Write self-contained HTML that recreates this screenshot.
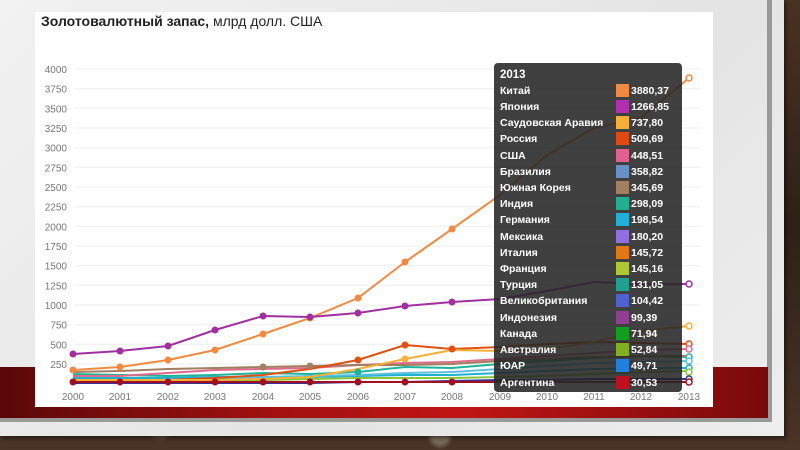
<!DOCTYPE html>
<html><head><meta charset="utf-8"><style>
*{margin:0;padding:0;box-sizing:border-box}
body{width:800px;height:450px;overflow:hidden;position:relative;font-family:"Liberation Sans",sans-serif;background:#3b2b20}
.brick{position:absolute;left:0;top:0;width:800px;height:450px;background:radial-gradient(circle at 20% 95%,#6a5848 0 8px,transparent 14px),radial-gradient(circle at 55% 97%,#7a6a58 0 7px,transparent 13px),radial-gradient(circle at 80% 93%,#6a5848 0 8px,transparent 14px),linear-gradient(180deg,#4a3222,#2e2018 50%,#4a3426)}
.slide{position:absolute;left:0;top:0;width:784px;height:436px;background:linear-gradient(135deg,#f2f2f2,#e4e4e4 60%,#eeeeee);box-shadow:2px 2px 4px rgba(0,0,0,.5)}
.vline{position:absolute;left:767px;top:0;width:5px;height:422px;background:#9a9a9a}
.red{position:absolute;left:0;top:367px;width:768px;height:51px;background:linear-gradient(90deg,#5a0808,#a11010 35%,#c01515 60%,#7a0a0a)}
.redsh{position:absolute;left:0;top:418px;width:772px;height:4px;background:#9a9a9a}
.chart{position:absolute;left:35px;top:12px;width:678px;height:395px;background:#fff}
.title{position:absolute;left:41px;top:13px;font-size:14px;color:#222}
.tip{position:absolute;left:494px;top:63px;width:188px;height:329px;background:rgba(38,38,38,.88);border-radius:4px;color:#fff;font-weight:bold;font-size:10.5px}
.row{position:absolute;left:6px;height:14px;line-height:14px}
.sw{position:absolute;left:122px;width:13px;height:13px}
.val{position:absolute;left:137px}
</style></head><body>
<div class="brick"></div>
<div class="slide"></div>
<div class="vline"></div>
<div class="red"></div>
<div class="redsh"></div>
<div class="chart"></div>
<div class="title"><b>Золотовалютный запас,</b> млрд долл. США</div>
<svg style="position:absolute;left:0;top:0" width="800" height="450" font-family="Liberation Sans" font-size="10" fill="#777">
<g stroke="#eeeeee" stroke-width="1">
<line x1="75" x2="700" y1="69" y2="69"/><line x1="75" x2="700" y1="88.7" y2="88.7"/><line x1="75" x2="700" y1="108.3" y2="108.3"/><line x1="75" x2="700" y1="128" y2="128"/><line x1="75" x2="700" y1="147.7" y2="147.7"/><line x1="75" x2="700" y1="167.3" y2="167.3"/><line x1="75" x2="700" y1="187" y2="187"/><line x1="75" x2="700" y1="206.7" y2="206.7"/><line x1="75" x2="700" y1="226.3" y2="226.3"/><line x1="75" x2="700" y1="246" y2="246"/><line x1="75" x2="700" y1="265.7" y2="265.7"/><line x1="75" x2="700" y1="285.3" y2="285.3"/><line x1="75" x2="700" y1="305" y2="305"/><line x1="75" x2="700" y1="324.7" y2="324.7"/><line x1="75" x2="700" y1="344.3" y2="344.3"/><line x1="75" x2="700" y1="364" y2="364"/>
</g>
<g text-anchor="end">
<text x="67" y="73">4000</text><text x="67" y="92.7">3750</text><text x="67" y="112.3">3500</text><text x="67" y="132">3250</text><text x="67" y="151.7">3000</text><text x="67" y="171.3">2750</text><text x="67" y="191">2500</text><text x="67" y="210.7">2250</text><text x="67" y="230.3">2000</text><text x="67" y="250">1750</text><text x="67" y="269.7">1500</text><text x="67" y="289.3">1250</text><text x="67" y="309">1000</text><text x="67" y="328.7">750</text><text x="67" y="348.3">500</text><text x="67" y="368">250</text>
</g>
<g text-anchor="middle">
<text x="73" y="400">2000</text><text x="120" y="400">2001</text><text x="168" y="400">2002</text><text x="215" y="400">2003</text><text x="263" y="400">2004</text><text x="310" y="400">2005</text><text x="358" y="400">2006</text><text x="405" y="400">2007</text><text x="452" y="400">2008</text><text x="500" y="400">2009</text><text x="547" y="400">2010</text><text x="594" y="400">2011</text><text x="641" y="400">2012</text><text x="689" y="400">2013</text>
</g>
<g fill="none" stroke-width="2">
<polyline stroke="#1fb39a" points="73,374 120,375 168,376 215,375 263,373 310,374 358,372 405,367 452,368 500,364 547,361 594,358 641,356 689,357"/>
<polyline stroke="#e06a8a" points="73,376 120,376 168,373 215,370 263,369 310,368 358,365 405,363 452,362 500,359 547,356 594,353 641,350 689,349"/>
<polyline stroke="#a08060" points="73,372 120,371 168,369 215,368 263,367 310,366 358,365 405,365 452,364 500,361 547,359 594,357 641,356 689,356"/>
<polyline stroke="#20b0d0" points="73,378 120,378 168,378 215,377 263,377 310,377 358,376 405,375 452,375 500,373 547,371 594,369 641,368 689,368"/>
<polyline stroke="#5bc0e0" points="73,380 120,380 168,380 215,379 263,377 310,376 358,375 405,373 452,372 500,369 547,366 594,363 641,362 689,361"/>
<polyline stroke="#8bc63a" points="73,381 120,381 168,380 215,380 263,380 310,379 358,378 405,378 452,378 500,377 547,376 594,374 641,372 689,371"/>
<polyline stroke="#e05010" points="73,381 120,381 168,380 215,378 263,375 310,369 358,360 405,345 452,349 500,347 547,344 594,342 641,343 689,344"/>
<polyline stroke="#f5b035" points="73,380 120,380 168,380 215,380 263,379 310,377 358,369 405,359 452,350 500,351 547,349 594,342 641,331 689,326"/>
<polyline stroke="#f08a40" points="73,370 120,367 168,360 215,350 263,334 310,318 358,298 405,262 452,229 500,195 547,155 594,128 641,118 689,78"/>
<polyline stroke="#a030a0" points="73,354 120,351 168,346 215,330 263,316 310,317 358,313 405,306 452,302 500,299 547,291 594,282 641,284 689,284"/>
<polyline stroke="#333399" points="73,383 120,383 168,383 215,383 263,383 310,383 358,382 405,382 452,381 500,380 547,380 594,379 641,379 689,379"/>
<polyline stroke="#a01020" points="73,382 120,382 168,382 215,382 263,382 310,382 358,382 405,382 452,382 500,382 547,382 594,382 641,382 689,382"/>
</g>
<g stroke-width="1.5" fill="#fff">
<circle cx="689" cy="78" r="3" stroke="#f08a40"/><circle cx="689" cy="284" r="3" stroke="#a030a0"/><circle cx="689" cy="326" r="3" stroke="#f5b035"/><circle cx="689" cy="344" r="3" stroke="#e05010"/><circle cx="689" cy="349" r="3" stroke="#e06a8a"/><circle cx="689" cy="357" r="3" stroke="#1fb39a"/><circle cx="689" cy="361" r="3" stroke="#5bc0e0"/><circle cx="689" cy="368" r="3" stroke="#20b0d0"/><circle cx="689" cy="372" r="3" stroke="#8bc63a"/><circle cx="689" cy="379" r="3" stroke="#333399"/><circle cx="689" cy="382" r="3" stroke="#a01020"/>
</g>
<g>
<circle cx="73" cy="370" r="3.5" fill="#f08a40"/><circle cx="120" cy="367" r="3.5" fill="#f08a40"/><circle cx="168" cy="360" r="3.5" fill="#f08a40"/><circle cx="215" cy="350" r="3.5" fill="#f08a40"/><circle cx="263" cy="334" r="3.5" fill="#f08a40"/><circle cx="310" cy="318" r="3.5" fill="#f08a40"/><circle cx="358" cy="298" r="3.5" fill="#f08a40"/><circle cx="405" cy="262" r="3.5" fill="#f08a40"/><circle cx="452" cy="229" r="3.5" fill="#f08a40"/>
<circle cx="73" cy="354" r="3.5" fill="#a030a0"/><circle cx="120" cy="351" r="3.5" fill="#a030a0"/><circle cx="168" cy="346" r="3.5" fill="#a030a0"/><circle cx="215" cy="330" r="3.5" fill="#a030a0"/><circle cx="263" cy="316" r="3.5" fill="#a030a0"/><circle cx="310" cy="317" r="3.5" fill="#a030a0"/><circle cx="358" cy="313" r="3.5" fill="#a030a0"/><circle cx="405" cy="306" r="3.5" fill="#a030a0"/><circle cx="452" cy="302" r="3.5" fill="#a030a0"/>
<circle cx="73" cy="382" r="3.5" fill="#a01020"/><circle cx="120" cy="382" r="3.5" fill="#a01020"/><circle cx="168" cy="382" r="3.5" fill="#a01020"/><circle cx="215" cy="382" r="3.5" fill="#a01020"/><circle cx="263" cy="382" r="3.5" fill="#a01020"/><circle cx="310" cy="382" r="3.5" fill="#a01020"/><circle cx="358" cy="382" r="3.5" fill="#a01020"/><circle cx="405" cy="382" r="3.5" fill="#a01020"/><circle cx="452" cy="382" r="3.5" fill="#a01020"/>
<circle cx="358" cy="360" r="3.5" fill="#e05010"/><circle cx="405" cy="345" r="3.5" fill="#e05010"/><circle cx="452" cy="349" r="3.5" fill="#e05010"/>
<circle cx="358" cy="372" r="3.5" fill="#1fb39a"/><circle cx="263" cy="367" r="3.5" fill="#a08060"/><circle cx="310" cy="366" r="3.5" fill="#a08060"/><circle cx="405" cy="359" r="3.5" fill="#f5b035"/>
</g>
</svg>
<div class="tip">
<div class="row" style="top:5px;font-size:11.5px">2013</div>
<div class="row" style="top:21px">Китай</div><div class="sw" style="top:21px;background:#f08a40"></div><div class="row val" style="top:21px">3880,37</div>
<div class="row" style="top:37px">Япония</div><div class="sw" style="top:37px;background:#b030b0"></div><div class="row val" style="top:37px">1266,85</div>
<div class="row" style="top:53px">Саудовская Аравия</div><div class="sw" style="top:53px;background:#f5b035"></div><div class="row val" style="top:53px">737,80</div>
<div class="row" style="top:69px">Россия</div><div class="sw" style="top:69px;background:#e04a10"></div><div class="row val" style="top:69px">509,69</div>
<div class="row" style="top:86px">США</div><div class="sw" style="top:86px;background:#e06090"></div><div class="row val" style="top:86px">448,51</div>
<div class="row" style="top:102px">Бразилия</div><div class="sw" style="top:102px;background:#6a90c8"></div><div class="row val" style="top:102px">358,82</div>
<div class="row" style="top:118px">Южная Корея</div><div class="sw" style="top:118px;background:#a08060"></div><div class="row val" style="top:118px">345,69</div>
<div class="row" style="top:134px">Индия</div><div class="sw" style="top:134px;background:#20b090"></div><div class="row val" style="top:134px">298,09</div>
<div class="row" style="top:150px">Германия</div><div class="sw" style="top:150px;background:#20b0d8"></div><div class="row val" style="top:150px">198,54</div>
<div class="row" style="top:167px">Мексика</div><div class="sw" style="top:167px;background:#9070e0"></div><div class="row val" style="top:167px">180,20</div>
<div class="row" style="top:183px">Италия</div><div class="sw" style="top:183px;background:#e07a10"></div><div class="row val" style="top:183px">145,72</div>
<div class="row" style="top:199px">Франция</div><div class="sw" style="top:199px;background:#b0c830"></div><div class="row val" style="top:199px">145,16</div>
<div class="row" style="top:215px">Турция</div><div class="sw" style="top:215px;background:#20a090"></div><div class="row val" style="top:215px">131,05</div>
<div class="row" style="top:231px">Великобритания</div><div class="sw" style="top:231px;background:#5060d0"></div><div class="row val" style="top:231px">104,42</div>
<div class="row" style="top:248px">Индонезия</div><div class="sw" style="top:248px;background:#904090"></div><div class="row val" style="top:248px">99,39</div>
<div class="row" style="top:264px">Канада</div><div class="sw" style="top:264px;background:#10a020"></div><div class="row val" style="top:264px">71,94</div>
<div class="row" style="top:280px">Австралия</div><div class="sw" style="top:280px;background:#80b020"></div><div class="row val" style="top:280px">52,84</div>
<div class="row" style="top:296px">ЮАР</div><div class="sw" style="top:296px;background:#2080e0"></div><div class="row val" style="top:296px">49,71</div>
<div class="row" style="top:313px">Аргентина</div><div class="sw" style="top:313px;background:#c01020"></div><div class="row val" style="top:313px">30,53</div>
</div>
</body></html>
